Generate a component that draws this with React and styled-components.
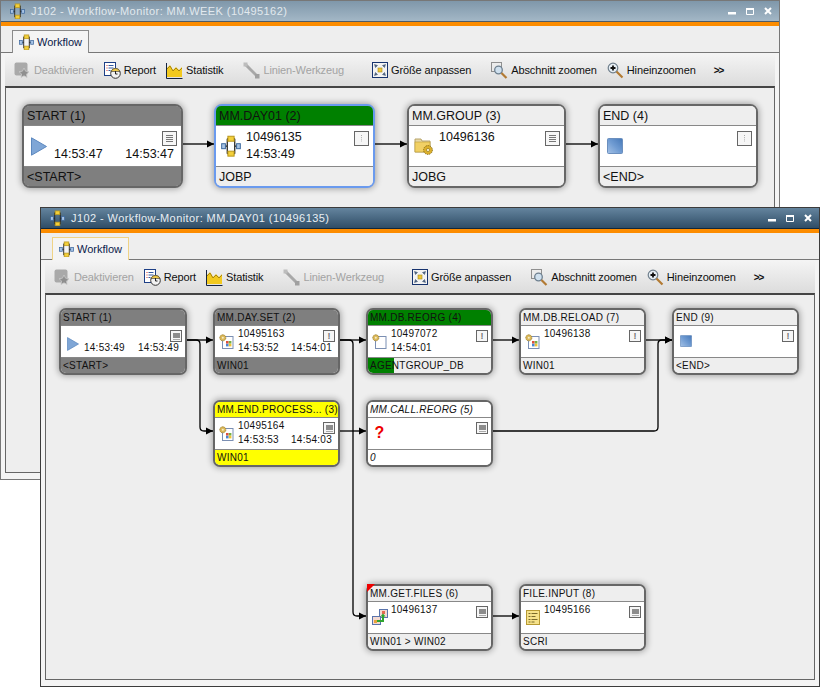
import React from "react";
import styled, { createGlobalStyle, css } from "styled-components";

const Global = createGlobalStyle`
  html, body { margin: 0; padding: 0; background: #fff; }
  * { box-sizing: border-box; }
`;

const Desktop = styled.div`
  position: relative;
  width: 820px;
  height: 687px;
  overflow: hidden;
  background: #fff;
  font-family: "Liberation Sans", Arial, sans-serif;
`;

const Win = styled.section`
  position: absolute;
  left: ${(p) => p.$x}px;
  top: ${(p) => p.$y}px;
  width: 780px;
  height: 480px;
  display: flex;
  flex-direction: column;
  background: #f4f4f4;
  border: 1px solid ${(p) => (p.$active ? "#3c3c3c" : "#777")};
`;

const TitleBar = styled.header`
  height: 21px;
  flex: none;
  display: flex;
  align-items: center;
  padding: 0 7px 0 9px;
  color: ${(p) => (p.$active ? "#e8eef3" : "#e2e9ee")};
  font-size: 11px;
  letter-spacing: 0.42px;
  border-bottom: 1px solid ${(p) => (p.$active ? "#12283a" : "#4e5c68")};
  background: ${(p) =>
    p.$active
      ? "linear-gradient(#64849e, #2f4d66)"
      : "linear-gradient(#7f97aa, #a3b7c6)"};
`;

const TitleText = styled.span`
  margin-left: 6px;
  flex: 1;
`;

const WinButtons = styled.div`
  display: flex;
  align-items: center;
  gap: 10px;
`;

const OrangeBar = styled.div`
  height: 4px;
  flex: none;
  background: #fc8c00;
`;

const TabStrip = styled.div`
  height: 27px;
  flex: none;
  padding: 4px 0 0 11px;
  display: flex;
  background: #eeeeee;
  border-bottom: 1px solid #777;
`;

const Tab = styled.div`
  width: 77px;
  height: 23px;
  display: flex;
  align-items: center;
  gap: 3px;
  padding-left: 6px;
  font-size: 11px;
  color: #0b1a4a;
  background: #f4f4f4;
  border: 1px solid ${(p) => (p.$active ? "#efd386" : "#8a8a8a")};
  border-bottom: none;
`;

const Toolbar = styled.nav`
  height: 32px;
  flex: none;
  margin: 1px 4px 0;
  display: flex;
  align-items: center;
  padding-left: 9px;
  background: linear-gradient(#f4f4f4, #dcdcdc);
`;

const ToolItem = styled.span`
  display: flex;
  align-items: center;
  gap: 3px;
  margin-left: ${(p) => p.$gap || 0}px;
  font-size: 11px;
  letter-spacing: -0.12px;
  white-space: nowrap;
  color: ${(p) => (p.$off ? "#a3a3a3" : "#101010")};
`;

const More = styled.span`
  margin-left: ${(p) => p.$gap}px;
  font-size: 10px;
  font-weight: bold;
  letter-spacing: -1px;
  color: #111;
`;

const Canvas = styled.main`
  position: relative;
  flex: 1;
  margin: 0 4px 6px;
  background: #eeeeee;
  border: 1px solid #666;
  border-top: 2px solid #444;
`;

const EdgeLayer = styled.svg`
  position: absolute;
  left: 0;
  top: 0;
  width: 100%;
  height: 100%;
`;

const fill = {
  gray: "#7f7f7f",
  green: "#008000",
  yellow: "#ffff00",
  white: "#ffffff",
  plain: "#eeeeee",
};

const Node = styled.article`
  position: absolute;
  left: ${(p) => p.$x}px;
  top: ${(p) => p.$y}px;
  width: ${(p) => p.$w}px;
  height: ${(p) => (p.$big ? 84 : 67)}px;
  display: flex;
  flex-direction: column;
  overflow: visible;
  color: #111;
  background: #fff;
  border: 2px solid ${(p) => (p.$selected ? "#6a9aee" : "#666")};
  border-radius: ${(p) => (p.$big ? 8 : 7)}px;
  box-shadow: 0 0 6px 1px rgba(0, 0, 0, 0.32);
  font-size: ${(p) => (p.$big ? 12.5 : 10)}px;
  letter-spacing: ${(p) => (p.$big ? 0 : 0.25)}px;
  font-style: ${(p) => (p.$italic ? "italic" : "normal")};
`;

const NodeHead = styled.div`
  position: relative;
  height: ${(p) => (p.$big ? 20 : 16)}px;
  flex: none;
  display: flex;
  align-items: center;
  padding-left: ${(p) => (p.$big ? 3 : 2)}px;
  white-space: nowrap;
  background: ${(p) => fill[p.$tone]};
  border-bottom: 1px solid #888;
  border-radius: 5px 5px 0 0;
`;

const NodeBody = styled.div`
  position: relative;
  flex: 1;
  min-height: 0;
  display: grid;
  grid-template-columns: ${(p) => (p.$big ? 30 : 23)}px 1fr;
  grid-template-rows: ${(p) => (p.$big ? 17 : 14)}px ${(p) => (p.$big ? 17 : 14)}px;
  padding: ${(p) => (p.$big ? "3px 7px 0 0" : "1px 6px 0 0")};
  line-height: ${(p) => (p.$big ? 17 : 14)}px;
  background: #fff;
`;

const IconCell = styled.div`
  grid-row: 1 / span 2;
  display: flex;
  align-items: center;
  justify-content: center;
  margin-top: ${(p) => p.$shift || 0}px;
`;

const RunId = styled.div`
  grid-column: 2;
`;

const Times = styled.div`
  grid-column: 2;
  display: flex;
  justify-content: space-between;
`;

const NodeFoot = styled.div`
  position: relative;
  height: ${(p) => (p.$big ? 20 : 16)}px;
  flex: none;
  display: flex;
  align-items: center;
  padding-left: ${(p) => (p.$big ? 3 : 2)}px;
  white-space: nowrap;
  background: ${(p) => fill[p.$tone]};
  border-top: 1px solid #888;
  border-radius: 0 0 5px 5px;
  overflow: hidden;
`;

const FootBar = styled.div`
  position: absolute;
  left: 0;
  top: 0;
  bottom: 0;
  background: #008000;
`;

const FootText = styled.span`
  position: relative;
`;

const Badge = styled.div`
  position: absolute;
  ${(p) =>
    p.$big
      ? css`
          right: 4px;
          top: 5px;
          width: 15px;
          height: 15px;
        `
      : css`
          right: 3px;
          top: 4px;
          width: 12px;
          height: 12px;
        `}
  display: flex;
  align-items: center;
  justify-content: center;
  background: #f6f6f6;
  border: ${(p) => (p.$big ? "1.5px" : "1.5px")} solid #666;
`;

const Bang = styled.span`
  font-size: 9px;
  font-weight: bold;
  line-height: 9px;
  color: #777;
  letter-spacing: 0;
  font-style: normal;
`;

const Unknown = styled.span`
  font-size: 16px;
  line-height: 16px;
  font-weight: bold;
  font-style: normal;
  color: #ee0000;
`;

const Flag = styled.div`
  position: absolute;
  left: -1px;
  top: -2px;
  width: 8px;
  height: 8px;
  background: #ee0000;
  clip-path: polygon(0 0, 100% 0, 0 100%);
`;

/* ---------- icons ---------- */
const WorkflowIcon = ({ s = 16 }) => (
  <svg width={s} height={s * 1.12} viewBox="0 0 16 18">
    <path d="M3 9h2M5 3v12M5 3h2M5 15h2M11 3v12M9 3h2M9 15h2M11 9h2" stroke="#222" strokeWidth="1" fill="none" />
    <rect x="5.5" y="1" width="5" height="4" fill="#f3cf3a" stroke="#b8961c" strokeWidth=".8" />
    <rect x="5.5" y="13" width="5" height="4" fill="#f3cf3a" stroke="#b8961c" strokeWidth=".8" />
    <rect x=".5" y="7" width="3" height="4" fill="#a8c4e6" stroke="#3d689e" strokeWidth=".8" />
    <rect x="12.5" y="7" width="3" height="4" fill="#a8c4e6" stroke="#3d689e" strokeWidth=".8" />
  </svg>
);

const DeactivateIcon = () => (
  <svg width="17" height="17" viewBox="0 0 17 17">
    <rect x="0.5" y="0.5" width="13" height="13" rx="2" fill="#a9a9a9" />
    <path d="M10 6l1.6 3.2 3.4.5-2.5 2.3.6 3.4-3.1-1.6-3 1.6.6-3.4L5 9.700l3.400-.5z" fill="#8f8f8f" stroke="#c9c9c9" strokeWidth=".8" />
  </svg>
);

const ReportIcon = () => (
  <svg width="17" height="17" viewBox="0 0 17 17">
    <rect x="0.5" y="0.500" width="11" height="13" fill="#fff" stroke="#1d3f86" />
    <path d="M2.500 3.500h1M2.500 6h1M2.500 8.500h1" stroke="#d43a2a" />
    <path d="M4.500 3.500h5M4.500 6h5M4.500 8.500h2" stroke="#345aa0" />
    <circle cx="11.500" cy="11.500" r="4.800" fill="#f2f2f2" stroke="#333" />
    <path d="M7 9.500a4.800 4.800 0 0 1 9 0z" fill="#efc94a" stroke="#333" strokeWidth=".6" />
    <path d="M11.500 9v3h2" stroke="#222" fill="none" />
  </svg>
);

const StatIcon = () => (
  <svg width="17" height="17" viewBox="0 0 17 17">
    <path d="M1 15V6l3-3 3 5 3-3 3 3 3-3v10z" fill="#f2c91f" />
    <path d="M1 7l3-3 3 5 3-3 3 3 3-3" fill="none" stroke="#a8860f" />
    <path d="M.5 1v15.500H16.500" fill="none" stroke="#15233f" />
  </svg>
);

const LineIcon = () => (
  <svg width="17" height="17" viewBox="0 0 17 17">
    <path d="M2 2l13 13" stroke="#a8a8a8" strokeWidth="3" />
    <rect x="0.500" y="0.500" width="4" height="4" fill="#bdbdbd" />
    <rect x="12" y="12" width="4.500" height="4.500" fill="#a0a0a0" />
  </svg>
);

const FitIcon = () => (
  <svg width="16" height="16" viewBox="0 0 16 16">
    <rect x="0.500" y="0.500" width="15" height="15" fill="#f3f3f3" stroke="#17336e" />
    <path d="M2.500 2.500l3 1-2 2zM13.500 2.500l-3 1 2 2zM2.500 13.500l3-1-2-2zM13.500 13.500l-3-1 2-2z" fill="#4a5f7c" stroke="#4a5f7c" strokeWidth=".6" />
    <rect x="6" y="6" width="4" height="4" fill="#ecc63a" stroke="#a98a16" strokeWidth=".6" />
  </svg>
);

const ZoomAreaIcon = () => (
  <svg width="17" height="17" viewBox="0 0 17 17">
    <rect x="0.500" y="0.500" width="10" height="9" fill="none" stroke="#333" strokeDasharray="1 1" />
    <circle cx="7.500" cy="8" r="3.800" fill="#cfe0ee" stroke="#6d7f8f" strokeWidth="1.300" />
    <path d="M10.500 11l5 5" stroke="#b27a33" strokeWidth="2.200" />
  </svg>
);

const ZoomInIcon = () => (
  <svg width="17" height="17" viewBox="0 0 17 17">
    <circle cx="6" cy="6" r="4.800" fill="#e6eef4" stroke="#6f7f8c" strokeWidth="1.200" />
    <path d="M3.500 6h5M6 3.500v5" stroke="#111" strokeWidth="1.800" />
    <path d="M9.500 9.500l6 6" stroke="#b27a33" strokeWidth="2.200" />
  </svg>
);

const PlayIcon = ({ big }) => (
  <svg width={big ? 16 : 12} height={big ? 19 : 14} viewBox="0 0 16 19">
    <path d="M.5.800 15.500 9.500.5 18.200z" fill="#7fa6d6" stroke="#5c88bf" />
  </svg>
);

const EndIcon = ({ big }) => (
  <svg width={big ? 16 : 12} height={big ? 16 : 12} viewBox="0 0 16 16">
    <defs>
      <linearGradient id="endG" x1="0" y1="1" x2="1" y2="0">
        <stop offset="0" stopColor="#a5c2e6" />
        <stop offset=".5" stopColor="#6f9bd2" />
        <stop offset="1" stopColor="#4678b8" />
      </linearGradient>
    </defs>
    <rect x=".500" y=".500" width="15" height="15" rx="1" fill="url(#endG)" stroke="#6b8fbe" />
  </svg>
);

const FolderGearIcon = () => (
  <svg width="20" height="20" viewBox="0 0 20 20">
    <path d="M1 3h6l1 2h8v11H1z" fill="#e8d9a6" stroke="#b7a46a" />
    <rect x="1" y="6" width="15" height="10" fill="#f1d064" stroke="#b99a35" strokeWidth=".6" />
    <circle cx="14" cy="14" r="4.400" fill="#dcb02c" stroke="#8a6e14" strokeDasharray="1.400 .8" />
    <circle cx="14" cy="14" r="1.600" fill="#f7f0d0" stroke="#8a6e14" strokeWidth=".6" />
  </svg>
);

const JobIcon = ({ logo = true }) => (
  <svg width="15" height="15" viewBox="0 0 15 15">
    <rect x="3.500" y="2.500" width="10.500" height="12" fill="#fff" stroke="#7b8fb3" />
    {logo && (
      <>
        <rect x="7" y="7" width="2.600" height="2.600" fill="#e0503c" />
        <rect x="9.800" y="7" width="2.600" height="2.600" fill="#76b043" />
        <rect x="7" y="9.800" width="2.600" height="2.600" fill="#4a84d4" />
        <rect x="9.800" y="9.800" width="2.600" height="2.600" fill="#f1c232" />
      </>
    )}
    <circle cx="3.800" cy="3.800" r="3" fill="#dcb95a" stroke="#a08433" strokeDasharray="1.200 .6" />
    <circle cx="3.800" cy="3.800" r="1" fill="#f5edc8" />
  </svg>
);

const TransferIcon = () => (
  <svg width="16" height="16" viewBox="0 0 16 16">
    <rect x="7.500" y=".500" width="8" height="8" fill="#f3d9d0" stroke="#5a74ac" />
    <rect x=".500" y="7.500" width="8" height="8" fill="#f3d9d0" stroke="#5a74ac" />
    <rect x="2" y="11" width="3" height="3" fill="#e9a33c" />
    <rect x="10" y="2" width="3" height="3" fill="#e56a50" />
    <path d="M5 12h6V7" fill="none" stroke="#2fa52f" strokeWidth="2" />
    <path d="M8.500 7.500 11 4.500l2.500 3z" fill="#2fa52f" />
  </svg>
);

const ScriptIcon = () => (
  <svg width="14" height="15" viewBox="0 0 14 15">
    <rect x=".500" y=".500" width="13" height="14" fill="#f6e28a" stroke="#b79a33" />
    <path d="M2.500 3.500h2M5.500 3.500h6M2.500 6.500h2M5.500 6.500h4M2.500 9.500h2M5.500 9.500h6M2.500 12h2M5.500 12h3" stroke="#7a6a2a" />
  </svg>
);

const MinIcon = () => (
  <svg width="8" height="8" viewBox="0 0 8 8"><rect y="5" width="8" height="2.500" fill="#fff" /></svg>
);
const MaxIcon = () => (
  <svg width="8" height="8" viewBox="0 0 8 8"><path d="M.500 1.500h7v6h-7z" fill="none" stroke="#fff" /><rect width="8" height="2" y="1" fill="#fff" /></svg>
);
const CloseIcon = () => (
  <svg width="8" height="8" viewBox="0 0 8 8"><path d="M1 1l6 6M7 1 1 7" stroke="#fff" strokeWidth="2" /></svg>
);

const BadgeMark = ({ kind, big }) => {
  if (kind === "bang") return <Bang>!</Bang>;
  if (kind === "dots")
    return (
      <svg width="9" height="9" viewBox="0 0 9 9">
        <path d="M4.500 1v7" stroke="#aaa" strokeDasharray="1 1.200" />
      </svg>
    );
  if (kind === "lines")
    return (
      <svg width="9" height="9" viewBox="0 0 9 9">
        <path d="M1 1.500h7M1 3.500h7M1 5.500h7M1 7.500h7" stroke="#777" />
      </svg>
    );
  return (
    <svg width="7" height="7" viewBox="0 0 7 7">
      <rect width="7" height="5" fill="#8c8c8c" />
      <rect y="6" width="7" height="1" fill="#aaa" />
    </svg>
  );
};

const icons = {
  play: (big) => <PlayIcon big={big} />,
  end: (big) => <EndIcon big={big} />,
  wf: () => <WorkflowIcon s={20} />,
  folder: () => <FolderGearIcon />,
  job: () => <JobIcon />,
  agent: () => <JobIcon logo={false} />,
  transfer: () => <TransferIcon />,
  script: () => <ScriptIcon />,
  unknown: () => <Unknown>?</Unknown>,
};

const FlowNode = ({ n, big }) => (
  <Node $x={n.x} $y={n.y} $w={n.w} $big={big} $selected={n.selected} $italic={n.italic}>
    <NodeHead $big={big} $tone={n.head || "plain"}>{n.title}</NodeHead>
    <NodeBody $big={big}>
      <IconCell $shift={n.shift}>{icons[n.icon](big)}</IconCell>
      <RunId>{n.id}</RunId>
      <Times>
        <span>{n.t1}</span>
        <span>{n.t2}</span>
      </Times>
      <Badge $big={big}><BadgeMark kind={n.badge} big={big} /></Badge>
    </NodeBody>
    <NodeFoot $big={big} $tone={n.foot || "plain"}>
      {n.progress ? <FootBar style={{ width: n.progress }} /> : null}
      <FootText>{n.label}</FootText>
    </NodeFoot>
    {n.flag ? <Flag /> : null}
  </Node>
);

const Edges = ({ id, paths }) => (
  <EdgeLayer>
    <defs>
      <marker id={id} markerUnits="userSpaceOnUse" markerWidth="8" markerHeight="8" refX="7" refY="4" orient="auto">
        <path d="M0 .5 7 4 0 7.500z" fill="#000" />
      </marker>
    </defs>
    {paths.map((d, i) => (
      <path key={i} d={d} fill="none" stroke="#000" strokeWidth="1.300" markerEnd={`url(#${id})`} />
    ))}
  </EdgeLayer>
);

const ToolRow = () => (
  <Toolbar>
    <ToolItem $off><DeactivateIcon />Deaktivieren</ToolItem>
    <ToolItem $gap={10}><ReportIcon />Report</ToolItem>
    <ToolItem $gap={10}><StatIcon />Statistik</ToolItem>
    <ToolItem $gap={20} $off><LineIcon />Linien-Werkzeug</ToolItem>
    <ToolItem $gap={28}><FitIcon />Größe anpassen</ToolItem>
    <ToolItem $gap={20}><ZoomAreaIcon />Abschnitt zoomen</ToolItem>
    <ToolItem $gap={10}><ZoomInIcon />Hineinzoomen</ToolItem>
    <More $gap={18}>&gt;&gt;</More>
  </Toolbar>
);

const Window = ({ x, y, active, title, nodes, paths, big, id }) => (
  <Win $x={x} $y={y} $active={active}>
    <TitleBar $active={active}>
      <WorkflowIcon s={15} />
      <TitleText>{title}</TitleText>
      <WinButtons>
        <MinIcon />
        <MaxIcon />
        <CloseIcon />
      </WinButtons>
    </TitleBar>
    <OrangeBar />
    <TabStrip>
      <Tab $active={active}><WorkflowIcon s={15} />Workflow</Tab>
    </TabStrip>
    <ToolRow />
    <Canvas>
      <Edges id={id} paths={paths} />
      {nodes.map((n) => (
        <FlowNode key={n.title} n={n} big={big} />
      ))}
    </Canvas>
  </Win>
);

const weekNodes = [
  { x: 16, y: 16, w: 161, title: "START (1)", head: "gray", foot: "gray", icon: "play", t1: "14:53:47", t2: "14:53:47", label: "<START>", badge: "lines" },
  { x: 208, y: 16, w: 161, title: "MM.DAY01 (2)", head: "green", selected: true, icon: "wf", id: "10496135", t1: "14:53:49", label: "JOBP", badge: "dots" },
  { x: 401, y: 16, w: 159, title: "MM.GROUP (3)", icon: "folder", id: "10496136", label: "JOBG", badge: "lines" },
  { x: 592, y: 16, w: 160, title: "END (4)", icon: "end", label: "<END>", badge: "dots" },
];

const weekEdges = ["M177 56H208", "M369 56H401", "M560 56H592"];

const dayNodes = [
  { x: 13, y: 13, w: 128, title: "START (1)", head: "gray", foot: "gray", icon: "play", shift: 5, t1: "14:53:49", t2: "14:53:49", label: "<START>", badge: "box" },
  { x: 167, y: 13, w: 127, title: "MM.DAY.SET (2)", head: "gray", foot: "gray", icon: "job", id: "10495163", t1: "14:53:52", t2: "14:54:01", label: "WIN01", badge: "bang" },
  { x: 320, y: 13, w: 127, title: "MM.DB.REORG (4)", head: "green", icon: "agent", id: "10497072", t1: "14:54:01", label: "AGENTGROUP_DB", progress: 26, badge: "bang" },
  { x: 473, y: 13, w: 127, title: "MM.DB.RELOAD (7)", icon: "job", id: "10496138", label: "WIN01", badge: "bang" },
  { x: 626, y: 13, w: 127, title: "END (9)", icon: "end", label: "<END>", badge: "bang" },
  { x: 167, y: 105, w: 127, title: "MM.END.PROCESS... (3)", head: "yellow", foot: "yellow", icon: "job", id: "10495164", t1: "14:53:53", t2: "14:54:03", label: "WIN01", badge: "box" },
  { x: 320, y: 105, w: 127, title: "MM.CALL.REORG (5)", head: "white", foot: "white", italic: true, icon: "unknown", label: "0", badge: "box" },
  { x: 320, y: 289, w: 127, title: "MM.GET.FILES (6)", icon: "transfer", id: "10496137", label: "WIN01 > WIN02", badge: "box", flag: true },
  { x: 473, y: 289, w: 127, title: "FILE.INPUT (8)", icon: "script", id: "10495166", label: "SCRI", badge: "box" },
];

const dayEdges = [
  "M141 45H167",
  "M141 45H150Q154 45 154 49V132Q154 136 158 136H167",
  "M294 45H320",
  "M294 45H303Q307 45 307 49V317Q307 321 311 321H320",
  "M294 136H320",
  "M447 45H473",
  "M600 45H626",
  "M447 136H608Q612 136 612 132V49Q612 45 616 45H626",
  "M447 321H473",
];

export default function App() {
  return (
    <Desktop>
      <Global />
      <Window id="arrowWeek" x={0} y={0} big title="J102 - Workflow-Monitor: MM.WEEK (10495162)" nodes={weekNodes} paths={weekEdges} />
      <Window id="arrowDay" x={40} y={207} active title="J102 - Workflow-Monitor: MM.DAY01 (10496135)" nodes={dayNodes} paths={dayEdges} />
    </Desktop>
  );
}
